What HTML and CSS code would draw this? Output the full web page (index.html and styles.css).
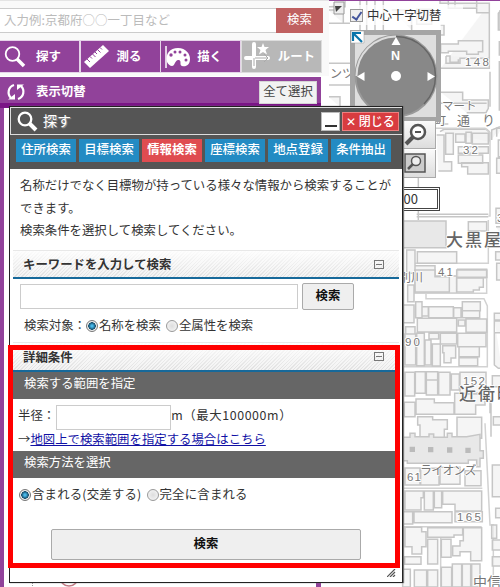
FILE: index.html
```html
<!DOCTYPE html>
<html lang="ja">
<head>
<meta charset="utf-8">
<title>探す</title>
<link rel="stylesheet" href="styles.css">
</head>
<body>
<svg class="map" width="172" height="587" viewBox="328 0 172 587">
  <!-- streets and buildings, north -->
  <g transform="translate(320 0) scale(.33333)" class="b">
    <path d="M25 20H75V0M25 70H90M25 190H90M25 255H90M25 290H60V320M25 30l45 0v40M120 0V95M140 0V95M165 0V90M190 0V95M215 30h60v60M290 28h45v45h-45z"/>
    <path d="M360 0V10H508V38H470V25H385V0M385 12V0M405 22V0M470 22V0M508 10V205H362M510 215V320M362 75h10v30h-10M362 132H415V122H488V155H475V163H440V154H385V158H362z"/>
    <path d="M378 168H390V187H415V178M378 168V190H420V175H508M362 277H428V300H505V325L498 338H440M362 310H500M540 30V90H535V40L545 28M545 125H538V165H545M545 185H538V330H545M360 395L372 388H500L508 395V425M365 372H385M515 420V390L540 380"/>
  </g>
  <g transform="translate(380 120) scale(.33333)" class="b">
    <path d="M165 25H315L330 38V288H325" class="line"/>
    <path d="M110 283H325M110 290H325M350 50V25H365M115 172V300M170 45H192V125H215V153H175M197 40H220V103H197zM227 42H255V67H227zM258 37H274V70H258zM277 40H325V72H277zM235 80H325V100H235zM235 105H308V130H235zM263 128H325V162H263V140H245V128zM355 60H370V110H355zM350 115H370V160H350z"/>
    <path class="big" d="M60 303H198V383H60z"/>
    <path d="M325 300V430H105" class="line"/>
    <path d="M265 305H320V333H265zM80 390H105V460H80zM112 395H230V430H112zM105 437H165V468H230V520H105zM233 448H320V473H233zM348 265H365V310H348zM348 320H365V350M347 395H365V420H347zM350 430H365V480H350z"/>
  </g>
  <g transform="translate(380 270) scale(.33333)" class="b">
    <path d="M138 72V86H312L322 108V290H69M105 70H320V0" class="line"/>
    <path d="M105 0H165V20H208V66H105zM230 0H320V22H230zM230 24H310V52H298V60H280V66H230zM83 45H102V95H83zM69 105H102V158H69zM107 95H126V143H107zM126 110H145V138H126zM146 110H220V143H146zM221 113H243V143H221zM247 95H301V122H247zM247 122H299V143H247zM112 145H230V186H112zM258 147H320V187H258zM235 150H255V168H235zM77 170H105V192H77zM75 192H107V285H75zM110 190H133V287H110zM135 210H153V285H135zM147 190H176V207H147zM157 222H181V288H157zM181 190H230V222H181zM233 190H318V230H233zM188 227H227V264H213V278H192V248H188zM237 230H298V260H237zM237 263H293V287H237zM343 145V285L355 295H365M343 130H365V150H343zM343 153H365V188H343z"/>
    <path d="M75 307H104V378H75zM106 305H136V370H106zM139 305H173V330H139zM139 330H173V375H139zM176 307H210V375H176zM214 312H238V360H214zM240 307H318V372H240zM73 397H105V440H73zM108 387H163V398H222V433H108zM224 370H315V405H287V433H224zM113 440H158V449H202V478H193V512H142V500H120V465H113zM231 442H305V505H231zM337 317H365V350H337zM333 400V500M330 380V430M340 440H365V465H340z"/>
  </g>
  <g transform="translate(380 420) scale(.33333)" class="b">
    <path class="big" d="M69 52H90V40H105V50H147V42H161V52H202V40H216V50H260L300 43V92H310V115H300V140H290V120H265V130H82V122H69z"/>
    <path d="M69 205H307M69 320H305M182 352V501M315 10L330 315H340V501" class="line"/>
    <path d="M75 144H120V195H75zM122 145H177V195H122zM180 142H240V193H180zM255 152H303V197H255zM75 213H130V233H123V270H75zM133 213H160V270H133zM163 213H185V263H163zM188 213H305V273H225V253H188zM69 275H98V312H69zM102 275H216V308H102zM225 275H307V305H225zM75 322H125V335H138V380H125V402H96V380H75zM143 323H248V345H222V352H143zM250 323H305V422H272V395H240V407H218V378H240V362H250zM143 358H173V432H143zM184 358H213V412H184zM74 410H123V433H74zM68 448H91V501H68zM103 450H140V501H103zM143 450H173V501H143zM184 442H215V501H184zM217 432H245V501H217zM247 432H272V501H247zM275 432H300V501H275zM337 135H365V230H337zM347 265H365V293H347zM335 315H350V355H335zM337 360H365V390H337zM337 410H365V438H337z"/>
    <path class="dot" d="M89 80h16v16H89zM144 81h16v16h-16zM201 82h16v16h-16zM256 83h16v16h-16z"/>
  </g>
  <g class="num">
    <text x="465" y="66" textLength="24">148</text>
    <text x="463" y="154" textLength="15">32</text>
    <text x="438" y="276" textLength="15">41</text>
    <text x="405" y="346" textLength="15">90</text>
    <text x="463" y="385" textLength="22">152</text>
    <text x="407" y="481" textLength="14">61</text>
    <text x="457" y="521" textLength="24">165</text>
    <text x="497" y="222">3</text>
  </g>
  <g class="place">
    <text x="330" y="78" font-size="12">ンツ</text>
    <text x="442" y="110" font-size="11.5">マート</text>
    <text x="434" y="125" font-size="12">町</text><text x="457" y="125" font-size="13">通</text><text x="482" y="125" font-size="13">り</text>
    <text x="446" y="246" font-size="17" letter-spacing="2" class="heavy">大黒屋</text>
    <text x="399" y="282" font-size="12">別川</text>
    <text x="459" y="400" font-size="17" letter-spacing="2" class="heavy">近衛町</text>
    <text x="420" y="475" font-size="12" letter-spacing="-.8">ライオンズ</text>
    <text x="473" y="587" font-size="14">中信</text>
  </g>
  <path class="mapline" d="M328 .5h172"/>
</svg>

<div class="cross"><span class="check"></span>中心十字切替</div>
<svg class="compass" width="118" height="118" viewBox="328 0 118 118">
  <path d="M334 2h10v12h-10z" fill="#eee" stroke="#999"/><path d="M335 6h7l-6 6z" fill="#444"/>
  <path d="M350 30H441V122H350z" fill="#a5a5a5"/>
  <path d="M355 35H436V117H355z" fill="#dedede"/>
  <circle cx="396" cy="76" r="40.5" fill="#888" stroke="#999" stroke-width="2"/>
  <path d="M356.5 76A39.500 39.500 0 0 1 396 36.500" fill="none" stroke="#ddd" stroke-width="2"/>
  <path d="M396 36.500A39.500 39.500 0 0 1 435.500 76A39.500 39.500 0 0 1 424 104" fill="none" stroke="#666" stroke-width="1.500"/>
  <path d="M396 37l-4.500 8h9zM357 76.500l7.500-4.500v9zM435 76.500l-7.500-4.500v9z" fill="#fff"/>
  <circle cx="396" cy="76" r="5" fill="#fff"/>
  <text x="391" y="60" class="north">N</text>
  <path d="M351 31h13v12h-13z" fill="#fff" stroke="#999" stroke-width=".5"/>
  <path d="M353 41v-8h8M354 34l8 8" fill="none" stroke="#0874aa" stroke-width="2.200"/>
</svg>
<div class="tools">
  <svg width="32" height="27" viewBox="0 0 32 27"><circle cx="15" cy="11" r="7" fill="#fff" stroke="#555" stroke-width="2.500"/><path d="M12 11h6" stroke="#555" stroke-width="2"/><path d="M10 16l-7 7" stroke="#555" stroke-width="4"/></svg>
  <svg width="32" height="27" viewBox="0 0 32 27"><path d="M2 4h20v18H2z" fill="#ccc" stroke="#555" stroke-width="1.500"/><circle cx="13" cy="11" r="4.500" fill="#eee" stroke="#555" stroke-width="1.500"/><path d="M10 14l-5 5" stroke="#555" stroke-width="2.500"/></svg>
</div>
<div class="scale"><span>00</span></div>

<aside class="side">
  <div class="finder"><div class="query">入力例:京都府○○一丁目など</div><div class="go">検索</div></div>
  <nav class="menu">
    <div class="item"><svg width="30" height="31" viewBox="0 0 30 31"><circle cx="12.500" cy="13" r="6.800" fill="none" stroke="#fff" stroke-width="1.800"/><path d="M17 18l7 7" stroke="#fff" stroke-width="3.500"/></svg><span>探す</span></div>
    <div class="item"><svg width="30" height="31" viewBox="0 0 30 31"><path d="M3 21L22 4l6 6L9 27z" fill="#fff"/><path d="M6 18l3 3M9 15.500l2 2M11.500 13l3 3M14 11l2 2M16.500 8.500l3 3M19 6.500l2 2" stroke="#91429a"/></svg><span>測る</span></div>
    <div class="item"><svg width="30" height="31" viewBox="0 0 30 31"><path d="M6 21C4 13 9 7 17 7c8 0 12 6 12 11 0 6-4 8-8 7-3-1 0-5-3-6-4-1-4 6-7 6-2 0-4-2-5-4z" fill="#fff"/><path d="M5 5v22" stroke="#fff" stroke-width="1.500"/><g fill="#91429a"><circle cx="10" cy="14" r="1.700"/><circle cx="14" cy="11" r="1.500"/><circle cx="19" cy="11" r="1.500"/><circle cx="24" cy="14" r="1.500"/><circle cx="25" cy="19" r="1.500"/></g></svg><span>描く</span></div>
    <div class="item off"><svg width="30" height="31" viewBox="0 0 30 31"><path d="M12 3v23M4 17h22" stroke="#fff" stroke-width="4" stroke-linecap="round"/><path d="M13 17h13M22 13l4 4-4 4M12 17v8" stroke="#aaa" fill="none"/><path d="M21 2l1.500 4h4.500l-3.500 3 1.500 4.500-4-2.500-4 2.500 1.500-4.500L15 6h4.500z" fill="#fff"/></svg><span>ルート</span></div>
  </nav>
  <div class="layers">
    <svg width="20" height="20" viewBox="0 0 20 20"><g fill="none" stroke="#fff" stroke-width="2.200"><path d="M8 3C2 5 1 12 5 16M12 17c6-2 7-9 3-13"/></g><path d="M2 17.500h7v-5.500zM18 2.500h-7v5.500z" fill="#fff"/></svg>
    <b>表示切替</b><span class="all">全て選択</span>
  </div>
  <div class="panel"><svg width="311" height="4" viewBox="5 583 311 4"><circle cx="70" cy="577" r="9" fill="none" stroke="#c27b85" stroke-width="1.500"/><path d="M33.500 583v4" stroke="#999" stroke-dasharray="1 1"/></svg></div>
</aside>

<section class="dialog">
  <header class="title">
    <svg width="24" height="26" viewBox="0 0 24 26"><circle cx="9" cy="11" r="6.300" fill="none" stroke="#fff" stroke-width="2.300"/><path d="M13 15l7 7" stroke="#fff" stroke-width="4"/></svg>
    <span class="name">探す</span><span class="min"></span><span class="close">✕ 閉じる</span>
  </header>
  <nav class="tabs"><span>住所検索</span><span>目標検索</span><span class="on">情報検索</span><span>座標検索</span><span>地点登録</span><span>条件抽出</span></nav>
  <div class="content">
    <p class="intro">名称だけでなく目標物が持っている様々な情報から検索することが<br>できます。<br>検索条件を選択して検索してください。</p>
    <h2 class="head"><span>キーワードを入力して検索</span><i></i></h2>
    <div class="keyword"><span class="field"></span><span class="btn">検索</span></div>
    <div class="target">検索対象：<i class="radio on"></i>名称を検索<i class="radio second"></i>全属性を検索</div>
    <h2 class="head detail"><span>詳細条件</span><i></i></h2>
    <h3 class="sub">検索する範囲を指定</h3>
    <div class="radius">半径：<span class="field"></span><span class="limit">m（最大100000m）</span></div>
    <div class="link">→<a>地図上で検索範囲を指定する場合はこちら</a></div>
    <h3 class="sub method">検索方法を選択</h3>
    <div class="mode"><i class="radio on"></i>含まれる(交差する)<i class="radio second"></i>完全に含まれる</div>
    <div class="btn wide">検索</div>
  </div>
  <svg class="grip" width="9" height="8" viewBox="0 0 9 8"><path d="M0 8l8-8M3 8l5-5M6 8l2-2" stroke="#555" stroke-width="1.200"/></svg>
</section>
<div class="mark"></div>
</body>
</html>
```
FILE: styles.css
```css
* { box-sizing: border-box; }
body {
  margin: 0; width: 500px; height: 587px; position: relative; overflow: hidden;
  background: #fff; color: #333;
  font: 12.4px/20px "Noto Sans CJK JP", sans-serif; white-space: nowrap;
}
svg { display: block; flex: none; }
i { font-style: normal; }

.map { position: absolute; left: 328px; top: 0; }
.b path { fill: #f1f1f1; fill-opacity: .7; stroke: #c6c6c6; stroke-width: 4.5; }
.b .line { fill: none; stroke: #d2d2d2; }
.b .big { fill: #e8e8e8; fill-opacity: 1; }
.b .dot { fill: #bbb; fill-opacity: 1; stroke: none; }
.num { font: 11.5px "Liberation Sans", sans-serif; fill: #777; stroke: #fff; stroke-width: 2px; paint-order: stroke; }
.place { fill: #777; stroke: #fff; stroke-width: 1.5px; paint-order: stroke; }
.place .heavy { font-weight: 500; fill: #666; }
.mapline { stroke: #91429a; }
.cross {
  position: absolute; left: 350px; top: 5px; height: 20px; width: 113px;
  display: flex; align-items: center; gap: 4px; background: rgba(255,255,255,.75);
}
.check { width: 13px; height: 13px; border: 1px solid #999; background: #eee; display: flex; justify-content: center; }
.check::after { content: ""; width: 4px; height: 8px; border: solid #42549c; border-width: 0 2px 2px 0; transform: rotate(35deg); }
.compass { position: absolute; left: 328px; top: 0; height: 118px; width: 118px; overflow: visible; }
.north { font: bold 12.500px "Liberation Sans", sans-serif; fill: #fff; }
.tools { position: absolute; left: 403px; top: 121px; width: 33px; display: grid; gap: 1px; }
.tools svg { background: linear-gradient(#fafafa, #ddd); border: solid #aaa; border-width: 0 1px 1px 0; width: 33px; height: 28px; }
.scale {
  position: absolute; left: 380px; top: 187px; width: 60px; height: 24px; padding: 0 19px;
  border: 3px double #444; background: #fff; line-height: 17px; text-align: right; font-size: 13px;
}

.side { position: relative; width: 329px; height: 587px; background: #fff; display: flex; flex-direction: column; }
.finder { height: 39px; padding-top: 7px; display: flex; background: #f9f9f9; border-top: 1px solid #e4e4e4; }
.query { width: 276px; height: 25px; border: solid #ccc; border-width: 1px 0; background: #fff; color: #bbb; padding-left: 4px; line-height: 22px; letter-spacing: .1px; }
.go { width: 47px; height: 25px; background: #c06060; color: #fff; text-align: center; line-height: 23px; }
.menu { height: 37px; padding: 2px 7px 4px 0; background: #f9f9f9; display: grid; grid-template-columns: 79px 79px 79px 79px; gap: 1.600px; }
.item { background: #91429a; color: #fff; display: flex; align-items: center; gap: 6px; font-weight: 700; outline: 1px solid #e5d3e8; outline-offset: 0; }
.item span { position: relative; top: -1px; }
.item.off { background: #b8b8b8; outline-color: #ddd; }
.layers { width: 321px; height: 31px; margin-top: 1px; background: #91429a; border-bottom: 5px solid #7a1586; color: #fff; display: flex; align-items: center; padding: 3px 4px 0 6px; }
.layers svg { margin-right: 10px; }
.layers b { position: relative; top: -1px; }
.all { margin-left: auto; width: 58px; height: 23px; border: 1px solid #d5d5d5; background: #f2f2f2; color: #444; text-align: center; line-height: 19px; position: relative; top: 1px; }
.panel { width: 321px; flex: 1; border: solid #91429a; border-width: 0 5px 0 4px; display: flex; align-items: flex-end; }

.dialog { position: absolute; left: 9px; top: 106px; width: 394px; height: 477px; background: #fff; border: 1px solid #222; box-shadow: 1px 0 1px #777; }
.title { height: 28px; background: #555; border: 1px solid #ddd; border-width: 1px 0 1px 1px; display: flex; align-items: center; color: #fff; padding: 0 3px 0 5px; }
.name { margin-left: 3px; font-size: 14px; line-height: 18px; padding-bottom: 3px; text-shadow: 1px 1px 1px #999; }
.min { margin-left: auto; width: 19px; height: 19px; background: #fff; border: 1px solid #bbb; display: flex; align-items: flex-end; justify-content: center; }
.min::after { content: ""; width: 12px; height: 2px; background: #333; margin-bottom: 3px; }
.close { width: 57px; height: 19px; margin-left: 2px; background: #d83c40; border: 1px solid #ee8080; font-size: 12px; font-weight: 500; line-height: 15px; text-align: center; }
.tabs { height: 34px; background: #555; padding: 4px 6px; display: flex; gap: 3px; }
.tabs span { width: 60px; height: 23px; background: #238bc3; color: #fff; text-align: center; line-height: 21px; font-weight: 500; }
.tabs .on { background: #df4c50; font-weight: 700; }
.content { padding: 0 3px; }
.intro { margin: 0; padding: 5px 7px 0; height: 81px; line-height: 22.600px; }
.head {
  margin: 0; height: 29px; padding: 0 15px 0 10px; font-size: 12.4px; line-height: 26px;
  display: flex; justify-content: space-between; align-items: center;
  border-top: 1px solid #e8e8e8; border-bottom: 2px solid #17699a;
  background: linear-gradient(rgba(255,255,255,.9), rgba(255,255,255,0)), repeating-linear-gradient(135deg, #f3f3f3 0 1.500px, #e1e1e1 1.500px 2.500px);
}
.head i { width: 10px; height: 9px; border: 1px solid #777; background: linear-gradient(#777, #777) center/6px 1px no-repeat; }
.keyword { display: flex; gap: 4px; padding: 4px 7px 0; align-items: center; }
.field { border: 1px solid #ccc; background: #fff; }
.keyword .field { width: 278px; height: 25px; }
.btn { width: 52px; height: 27px; border: 1px solid #aaa; border-radius: 2px; background: #efefef; color: #111; font-weight: 700; text-align: center; line-height: 23px; }
.target { height: 33px; padding: 0 10px 4px 11px; display: flex; align-items: center; }
.radio { width: 12px; height: 12px; border: 1px solid #999; border-radius: 50%; background: radial-gradient(#ddd, #f9f9f9); margin: 2px 1px 0 0; flex: none; }
.radio.on { border-color: #777; background: radial-gradient(circle, #48b8e8 0 1px, #124968 3.500px, #eee 4px); }
.radio.second { margin-left: 5px; }
.detail { margin-top: -1px; height: 30px; }
.sub { margin: 0; height: 27px; padding-left: 11px; background: #666; color: #fff; font-size: 12.4px; font-weight: 400; line-height: 23px; }
.radius { height: 32px; padding: 0 5px; display: flex; align-items: center; line-height: 18px; }
.radius .field { width: 115px; height: 25px; margin: 4px 0 0 1px; }
.limit { letter-spacing: .6px; }
.link { padding-left: 5px; height: 20px; line-height: 16px; }
.link a { color: #1111a5; text-decoration: underline; }
.mode { height: 36px; padding: 0 0 5px 6px; display: flex; align-items: center; letter-spacing: .2px; }
.wide { width: 310px; height: 31px; margin: 15px 0 0 38px; line-height: 27px; }
.grip { position: absolute; right: 6px; bottom: 5px; }
.mark { position: absolute; left: 8px; top: 345px; width: 392px; height: 223px; border: 5px solid #f00; }
```
